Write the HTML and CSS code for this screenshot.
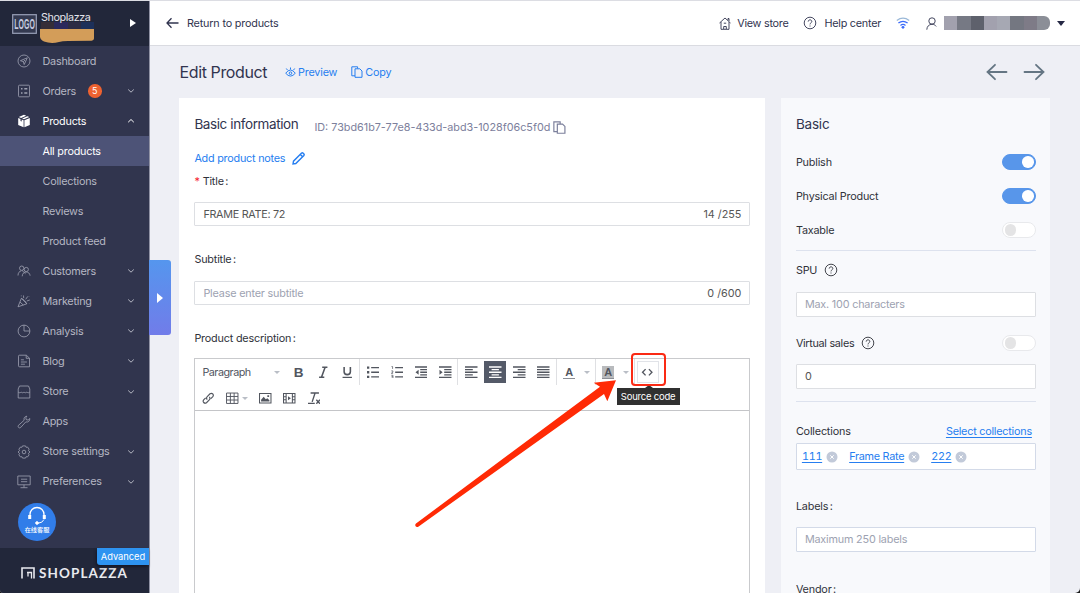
FILE: index.html
```html
<!DOCTYPE html>
<html lang="en">
<head>
<meta charset="UTF-8">
<meta name="viewport" content="width=device-width, initial-scale=1.0">
<title>Edit Product</title>
<link rel="stylesheet" href="styles.css">
</head>
<body>
    <!-- Shared icons -->
    <svg class="sprite">
        <symbol id="down" viewBox="0 0 8 6"><path d="M1.2 1.5 4 4.2 6.8 1.5"/></symbol>
        <symbol id="up" viewBox="0 0 8 6"><path d="M1.2 4.2 4 1.5 6.8 4.2"/></symbol>
        <symbol id="help" viewBox="0 0 14 14"><circle cx="7" cy="7" r="5.8"/><path d="M5.200 5.600c0-2.400 3.600-2.300 3.600-.1C8.800 6.900 7 6.800 7 8.400M7 9.500v1"/></symbol>
        <symbol id="copy" viewBox="0 0 12 12"><path d="M4 9.800H.8V.8h5.800V2.500M4 2.800h4.800l2.200 2.200v6.300H4z"/></symbol>
        <symbol id="remove" viewBox="0 0 12 12"><circle cx="6" cy="6" r="5.500" fill="#c2cad9" stroke="none"/><path d="M4.300 4.300l3.400 3.400M7.700 4.300 4.300 7.700" stroke="#fff"/></symbol>
    </svg>

    <div class="app">
        <aside class="sidebar">
            <div class="shop">
                <svg class="shop-logo" width="25" height="20" viewBox="0 0 25 20"><rect x=".7" y=".7" width="23.600" height="18.600" fill="#343a50" stroke="#9aa1b8" stroke-width="1.200"/><text x="2.300" y="8" transform="scale(1 1.900)" textLength="20.500" lengthAdjust="spacingAndGlyphs">LOGO</text></svg>
                <div class="shop-name">
                    <span>Shoplazza</span>
                    <svg width="56" height="24" viewBox="0 0 56 24"><path d="M1 2h13v8H1z" fill="#352d38"/><path d="M14 2h14v8H14z" fill="#2a285c"/><path d="M28 2h13v8H28z" fill="#2c2b44"/><path d="M41 2h13v8H41z" fill="#1d3059"/><path d="M0 9h54v9.500q0 2-2.500 2.200L28 21q-6 0-9 1-8 2-15-.5-4-2-4-5z" fill="#d39d59"/></svg>
                </div>
                <span class="play"></span>
            </div>

            <nav class="menu">
                <a class="menu-item"><svg class="icon" viewBox="0 0 14 14"><circle cx="7" cy="7" r="6"/><path d="M10.300 3.800 3.400 6.700l2.900.9.900 2.900zM6.300 7.600l1.700-1.500"/></svg><span>Dashboard</span></a>
                <a class="menu-item"><svg class="icon" viewBox="0 0 14 14"><rect x="1.500" y="1.200" width="11" height="11.600" rx="1"/><path d="M4 4.800h1.500M4 9h1.500M7.300 4.800h3M7.300 9h3" stroke-width="1.400"/></svg><span>Orders</span><b class="count">5</b><svg class="chevron"><use href="#down"/></svg></a>
                <a class="menu-item open"><svg class="icon solid" viewBox="0 0 14 14"><path d="M7 .8 9.200 1.700 4.100 4 1.800 3.100zM10.300 2.200l2 .9L7 5.300l-1.900-.8zM1.200 4l2.300 1v2l1.200.5V5.500L6.600 6.300v6.900L1.200 10.900zM12.800 4v6.900L7.400 13.200V6.300z"/></svg><span>Products</span><svg class="chevron"><use href="#up"/></svg></a>
                <a class="menu-item sub active"><span>All products</span></a>
                <a class="menu-item sub"><span>Collections</span></a>
                <a class="menu-item sub"><span>Reviews</span></a>
                <a class="menu-item sub"><span>Product feed</span></a>
                <a class="menu-item"><svg class="icon" viewBox="0 0 14 14"><circle cx="4.700" cy="4.200" r="2.200"/><circle cx="9.300" cy="5.500" r="2.100"/><path d="M1 11.500c0-2.600 1.300-4.300 3.300-4.600M5.200 12.300c.2-2.700 1.600-4.300 4-4.300 2.300 0 3.600 1.500 3.900 3.700M5 6.400l3.500 3.300"/></svg><span>Customers</span><svg class="chevron"><use href="#down"/></svg></a>
                <a class="menu-item"><svg class="icon" viewBox="0 0 14 14"><path d="M4.400 4.300 1 12.800l8.800-3zM3 8l3.200 3M4.400 4.300c2 1 4.500 3.300 5.400 5.500M6.700 4.100 6.500 1.500M8.700 5.300l2.100-2.900M9.800 7l3-1M12 2.300v.4M4.300 1.500v.8M12.300 9v.3"/></svg><span>Marketing</span><svg class="chevron"><use href="#down"/></svg></a>
                <a class="menu-item"><svg class="icon" viewBox="0 0 14 14"><circle cx="7" cy="7" r="5.900"/><path d="M7 1.100V7h5.900"/></svg><span>Analysis</span><svg class="chevron"><use href="#down"/></svg></a>
                <a class="menu-item"><svg class="icon" viewBox="0 0 14 14"><path d="M2.500 1.200h6.800l3.200 3v8.600h-10q-1 0-1-1V2.200q0-1 1-1zM9.200 1.300v3h3.200M3.900 5.800h3M3.900 8h6M3.900 10.200h4"/></svg><span>Blog</span><svg class="chevron"><use href="#down"/></svg></a>
                <a class="menu-item"><svg class="icon" viewBox="0 0 14 14"><path d="M2.500 1h9l1.300 3v9H1.200V4zM1.200 7c1 1 2.100 1 2.900 0 .9 1 2 1 2.900 0 .9 1 2 1 2.900 0 .8 1 2 1 2.900 0"/></svg><span>Store</span><svg class="chevron"><use href="#down"/></svg></a>
                <a class="menu-item"><svg class="icon" viewBox="0 0 14 14"><path d="M9.800 1.200c-2.200.2-3.300 2-2.600 4L1.400 10.400c-1 1.500.8 3.200 2.200 2.200l5.200-5.700c2.200.7 4.200-.8 4-3.400l-1.700 1.600-1.900-.5-.4-1.800zM3 10.900h.3"/></svg><span>Apps</span></a>
                <a class="menu-item"><svg class="icon" viewBox="0 0 14 14"><circle cx="7" cy="7" r="1.800"/><path d="M5.500.9h3l.6 1.400 1.500-.2 1.500 2.100-.7 1.400 1.600 1.400-1.600 1.400.7 1.400-1.500 2.100-1.500-.2-.6 1.400h-3l-.6-1.400-1.500.2-1.500-2.100.7-1.400L1 7l1.600-1.400-.7-1.400 1.500-2.100 1.500.2z"/></svg><span>Store settings</span><svg class="chevron"><use href="#down"/></svg></a>
                <a class="menu-item"><svg class="icon" viewBox="0 0 14 14"><path d="M.8 1h12.400v8.800H.8zM7 9.800v2.700M3.500 12.700h7M4 4.200h6.200M4 6.700h6.200"/></svg><span>Preferences</span><svg class="chevron"><use href="#down"/></svg></a>
            </nav>

            <div class="service">
                <svg width="20" height="19" viewBox="0 0 20 19"><path d="M3 9.500C2.300-1.200 17.700-1.200 17 9.500" stroke-width="1.300"/><path d="M2.700 9v4M17.300 9v4" stroke-width="3"/><path d="M17 13.500q-1.500 3.500-6 3.700" stroke-width="1"/><circle cx="10" cy="17" r="1.300" fill="#fff" stroke-width="1"/></svg>
                <span>在线客服</span>
            </div>

            <div class="brand">
                <span class="plan">Advanced</span>
                <svg width="14" height="12" viewBox="0 0 14 12"><path d="M1 11.500V1h12v10.500"/><path d="M6 5.500h4.500v6M7 5.500v4" stroke-width="1.300"/></svg>
                <span>SHOPLAZZA</span>
            </div>
            <button class="drawer"><span class="play"></span></button>
        </aside>

        <div class="page">
            <header class="topbar">
                <a class="back"><svg width="13" height="12" viewBox="0 0 13 12"><path d="M12.500 6H1M5.500 1.300 1 6l4.500 4.700"/></svg>Return to products</a>
                <div class="top-links">
                    <a class="store-link"><svg width="12" height="13" viewBox="0 0 12 13"><path d="M.5 6 6 1l5.500 5M2 5v7.300h8V5M4.700 12V9.500h2.600V12M4.800 6.200h2.400M9 3V1.500h1V4"/></svg>View store</a>
                    <a class="help-link"><svg width="14" height="14"><use href="#help"/></svg>Help center</a>
                    <svg class="wifi" width="14" height="12" viewBox="0 0 14 12"><path d="M.8 3.500q6.200-4.600 12.400 0" stroke="#9bb8d8"/><path d="M2.400 6.100q4.600-3.600 9.200 0M4.500 8.400q2.500-1.900 5 0" stroke="#3b6bfa"/><circle cx="7" cy="10.300" r="1.400" fill="#3b6bfa" stroke="none"/></svg>
                    <svg class="user" width="12" height="13" viewBox="0 0 12 13"><circle cx="6" cy="4" r="3.200"/><path d="M.8 12.700c.2-3.300 2-5.200 5.200-5.500 2 .1 3.200.9 4.200 2.200"/></svg>
                    <span class="user-name"><i></i><i></i><i></i><i></i><i></i><i></i><i></i><i></i></span>
                    <span class="caret"></span>
                </div>
            </header>

            <div class="heading">
                <h1>Edit Product</h1>
                <a class="preview"><svg width="11" height="11" viewBox="0 0 11 11"><path d="M.7 6.200Q5.500-.2 10.300 6.200 5.500 12 .7 6.200zM5.500 2.500V.5M2.500 3.100 1.300 1.500M8.500 3.100l1.200-1.600"/><circle cx="5.500" cy="6.200" r="1.300"/></svg>Preview</a>
                <a class="copy"><svg width="12" height="12"><use href="#copy"/></svg>Copy</a>
                <div class="pager">
                    <svg width="22" height="18" viewBox="0 0 22 18"><path d="M20.500 9H1.500M9 1.800 1.500 9 9 16.200"/></svg>
                    <svg width="22" height="18" viewBox="0 0 22 18"><path d="M1.500 9h19M13 1.800 20.500 9 13 16.200"/></svg>
                </div>
            </div>

            <div class="columns">
                <section class="card main-card">
                    <div class="card-head">
                        <h2>Basic information</h2>
                        <span class="product-id">ID: 73bd61b7-77e8-433d-abd3-1028f06c5f0d</span>
                        <svg width="13" height="13"><use href="#copy"/></svg>
                    </div>
                    <a class="notes">Add product notes<svg width="13" height="13" viewBox="0 0 13 13"><path d="M1 12l.5-2.800L9.600 1.100q.7-.6 1.400 0l.9.9q.6.700 0 1.400L3.800 11.500zM8.300 2.400l2.300 2.300"/></svg></a>
                    <label class="title-label"><em>*</em>Title<i>:</i></label>
                    <div class="field title-field"><span>FRAME RATE: 72</span><span class="counter">14 /255</span></div>
                    <label class="subtitle-label">Subtitle<i>:</i></label>
                    <div class="field subtitle-field"><span class="placeholder">Please enter subtitle</span><span class="counter">0 /600</span></div>
                    <label class="desc-label">Product description<i>:</i></label>

                    <div class="editor">
                        <div class="toolbar">
                            <div class="tools">
                                <div class="group">
                                    <span class="format">Paragraph<span class="tri"></span></span>
                                    <button><b class="glyph">B</b></button>
                                    <button><svg viewBox="0 0 12 12"><path d="M5 1.200h5M2 10.800h5M7.800 1.200 4.300 10.800" stroke-width="1.500"/></svg></button>
                                    <button><svg viewBox="0 0 12 12"><path d="M3 1v4.500q0 2.800 3 2.800t3-2.800V1" stroke-width="1.500"/><path d="M1.500 11h9"/></svg></button>
                                </div>
                                <div class="group">
                                    <button><svg viewBox="0 0 12 12"><path d="M4 1.500h8M4 6h8M4 10.500h8"/><path d="M0 1.500h2.200M0 6h2.200M0 10.500h2.200" stroke-width="2.200"/></svg></button>
                                    <button><svg viewBox="0 0 12 12"><path d="M4 1.500h8M4 6h8M4 10.500h8"/><path d="M.5.5h1v2.300M.3 4.700h1.500v1.200L.3 7h1.700M.3 8.900h1.600v2.800H.3M.5 10.200h1.400" stroke-width=".7"/></svg></button>
                                    <button><svg viewBox="0 0 12 12"><path d="M0 1h12M5 3.500h7M5 6h7M5 8.500h7M0 11h12"/><path d="M3.500 3.500v5L.5 6z" class="fill"/></svg></button>
                                    <button><svg viewBox="0 0 12 12"><path d="M0 1h12M5 3.500h7M5 6h7M5 8.500h7M0 11h12"/><path d="M.5 3.500v5l3-2.500z" class="fill"/></svg></button>
                                </div>
                                <div class="group">
                                    <button><svg viewBox="0 0 12 12"><path d="M0 1h12M0 3.500h7.500M0 6h12M0 8.500h7.500M0 11h12"/></svg></button>
                                    <button class="on"><svg viewBox="0 0 12 12"><path d="M0 1h12M2.500 3.500h7M0 6h12M2.500 8.500h7M0 11h12"/></svg></button>
                                    <button><svg viewBox="0 0 12 12"><path d="M0 1h12M4.500 3.500H12M0 6h12M4.500 8.500H12M0 11h12"/></svg></button>
                                    <button><svg viewBox="0 0 12 12"><path d="M0 1h12M0 3.500h12M0 6h12M0 8.500h12M0 11h12"/></svg></button>
                                </div>
                                <div class="group split">
                                    <button><span class="letter">A</span></button><span class="tri"></span>
                                </div>
                                <div class="group split">
                                    <button><span class="letter shade">A</span></button><span class="tri"></span>
                                </div>
                                <div class="group source">
                                    <button><svg viewBox="0 0 12 12"><path d="M4.400 3 1.500 6l2.900 3M7.600 3l2.900 3-2.900 3"/></svg></button>
                                    <span class="tooltip">Source code</span>
                                    <span class="mark"></span>
                                </div>
                            </div>
                            <div class="tools">
                                <button><svg viewBox="0 0 12 12"><path d="M5 7.300Q3.700 5.800 5 4.500L7.700 1.700q1.500-1 2.700.2 1 1.300 0 2.600L8.500 6.400M7 4.700q1.300 1.500 0 2.800l-2.700 2.800q-1.500 1-2.700-.2-1-1.300 0-2.600L3.500 5.600" stroke-width="1.100"/></svg></button>
                                <button><svg viewBox="0 0 12 12"><path d="M.5 1h11v10H.5zM.5 4.300h11M.5 7.700h11M4.200 1v10M7.800 1v10" stroke-width=".9"/></svg></button>
                                <span class="tri"></span>
                                <button><svg viewBox="0 0 12 12"><path d="M.5 1.500h11v9H.5z" stroke-width="1"/><path d="M2 9V7.500L4.500 4.500 6.500 7 8 6l2 2v1zM8 3h1.700v1.700H8z" class="fill"/></svg></button>
                                <button><svg viewBox="0 0 12 12"><path d="M.5 1.500h11v9H.5zM3 1.500v9M9 1.500v9M.5 4.500H3M.5 7.500H3M9 4.500h2.500M9 7.500h2.500" stroke-width="1"/><path d="M4.800 4v4L7.600 6z" class="fill"/></svg></button>
                                <button><svg viewBox="0 0 12 12"><path d="M2.500 1h8M0 11h6.500M6.800 1 4 9.500M8 7.500l3.500 3.800M11.500 7.500 8 11.300" stroke-width="1.300"/></svg></button>
                            </div>
                        </div>
                        <svg class="pointer" width="202" height="150" viewBox="0 0 202 150"><path d="M1 143.500 185 6.700l-6.300-4L201 .3l-8.700 21-3.300-7.300L3.300 146.700q-1.700 1-2.700-.4-.9-1.500.4-2.800z"/></svg>
                    </div>
                </section>

                <section class="card side-card">
                    <h2>Basic</h2>
                    <div class="option"><span>Publish</span><span class="switch checked"></span></div>
                    <div class="option"><span>Physical Product</span><span class="switch checked"></span></div>
                    <div class="option"><span>Taxable</span><span class="switch"></span></div>
                    <hr>
                    <div class="option spu"><span>SPU</span><svg class="help" width="14" height="14"><use href="#help"/></svg></div>
                    <div class="field spu-field"><span class="placeholder">Max. 100 characters</span></div>
                    <div class="option virtual"><span>Virtual sales</span><svg class="help" width="14" height="14"><use href="#help"/></svg><span class="switch"></span></div>
                    <div class="field"><span>0</span></div>
                    <hr>
                    <div class="option collections"><span>Collections</span><a class="select">Select collections</a></div>
                    <div class="field tags">
                        <a>111</a><svg width="12" height="12"><use href="#remove"/></svg>
                        <a>Frame Rate</a><svg width="12" height="12"><use href="#remove"/></svg>
                        <a>222</a><svg width="12" height="12"><use href="#remove"/></svg>
                    </div>
                    <label class="labels">Labels<i>:</i></label>
                    <div class="field labels-field"><span class="placeholder">Maximum 250 labels</span></div>
                    <label class="vendor">Vendor<i>:</i></label>
                </section>
            </div>
        </div>
    </div>
</body>
</html>
```
FILE: styles.css
```css
/* Global Styles */
* {
    box-sizing: border-box;
}

html {
    background-color: #1a1a1a;
}

body {
    margin: 0;
    height: 593px;
    overflow: hidden;
    font-family: Inter, "Noto Sans CJK SC", sans-serif;
    font-size: 10.8px;
    letter-spacing: -.18px;
    color: #30323a;
}

svg {
    fill: none;
    stroke: currentColor;
    flex: none;
}

h1, h2 {
    margin: 0;
    font-weight: 400;
    color: #31344f;
}

button {
    padding: 0;
    border: 0;
    background: none;
    color: inherit;
}

.sprite {
    position: absolute;
    width: 0;
    height: 0;
}

.app {
    display: flex;
    height: 593px;
    border-top: 1px solid #dcdde3;
    border-radius: 0 0 5px 4px;
    overflow: hidden;
    background-color: #eeeff5;
}

/* Sidebar */
.sidebar {
    position: relative;
    display: flex;
    flex-direction: column;
    flex: none;
    width: 150px;
    border-right: 1px solid #9092a4;
    background-color: #31354e;
    color: #b5b7c3;
}

.shop {
    display: flex;
    height: 45px;
    padding: 12px 13px 0 12px;
    background-color: #22273a;
}

.shop-logo {
    margin-top: 1px;
}

.shop-logo text {
    font: 700 7.500px "Liberation Sans", sans-serif;
    letter-spacing: 0;
    fill: #c3c9df;
    stroke: none;
}

.shop-name {
    display: flex;
    flex-direction: column;
    width: 92px;
    padding-left: 4px;
    color: #e4e5ec;
    line-height: 9px;
    letter-spacing: -.4px;
}

.shop-name svg {
    margin: -2px 0 0 -1px;
    stroke: none;
}

.shop-name span {
    position: relative;
}

.play {
    width: 0;
    height: 0;
    border: 4px solid transparent;
    border-left: 6px solid #fff;
    border-right: 0;
}

.shop .play {
    margin: 6px 0 0 1px;
}

.menu-item {
    display: flex;
    align-items: center;
    height: 30.05px;
    padding: 0 14px 0 17px;
    letter-spacing: -.22px;
}

.menu-item .icon {
    width: 14px;
    height: 14px;
    margin-right: 11.5px;
    stroke-width: .8;
    color: #9fa2b2;
}

.menu-item .icon.solid {
    fill: #fff;
    stroke: none;
}

.menu-item.sub {
    padding-left: 42.5px;
}

.menu-item.open,
.menu-item.active {
    color: #fff;
}

.menu-item.active {
    background-color: #4d5377;
}

.chevron {
    width: 8px;
    height: 6px;
    margin-left: auto;
}

.count {
    width: 13.5px;
    height: 13.5px;
    margin-left: 12px;
    border-radius: 50%;
    background-color: #ee6230;
    color: #fff;
    font-size: 9px;
    font-weight: 400;
    line-height: 13.5px;
    text-align: center;
}

.service {
    display: flex;
    flex-direction: column;
    align-items: center;
    width: 38px;
    height: 38px;
    margin: 6px 0 0 18px;
    padding-top: 3.5px;
    border-radius: 50%;
    background-color: #317de9;
    color: #fff;
}

.service span {
    font-size: 6.2px;
    font-weight: 500;
    line-height: 9px;
    letter-spacing: 0;
}

.brand {
    position: relative;
    display: flex;
    align-items: center;
    gap: 4px;
    height: 45px;
    margin-top: auto;
    padding: 5px 0 0 21px;
    background-color: #22273a;
    color: #e9eaef;
    font: 700 13.5px Lato, sans-serif;
    letter-spacing: 1.1px;
}

.brand svg {
    stroke-width: 1.6;
}

.plan {
    position: absolute;
    top: 0;
    right: 0;
    width: 52px;
    height: 16.5px;
    border-radius: 0 0 0 3px;
    background-color: #2e93f0;
    box-shadow: -1px 2px 3px #151827;
    color: #fff;
    font: 400 9.3px/17px Inter, sans-serif;
    letter-spacing: 0;
    text-align: center;
}

.drawer {
    position: absolute;
    top: 259px;
    left: 149px;
    display: flex;
    align-items: center;
    width: 22px;
    height: 75px;
    padding-left: 8px;
    border-radius: 0 3px 3px 0;
    background: linear-gradient(#5596ee, #717ce9);
}

.drawer .play {
    border-width: 5.5px 0 5.5px 6px;
}

/* Top bar */
.page {
    flex: 1;
    min-width: 0;
}

.topbar {
    display: flex;
    align-items: center;
    justify-content: space-between;
    height: 45px;
    padding: 0 15px 0 16px;
    border-bottom: 1px solid #dadbe1;
    background-color: #fff;
    color: #31344f;
}

.topbar a {
    display: flex;
    align-items: center;
}

.back svg {
    margin-right: 8px;
    stroke-width: 1.3;
}

.top-links {
    display: flex;
    align-items: center;
}

.top-links a {
    letter-spacing: -.25px;
}

.top-links svg {
    stroke-width: .9;
}

.store-link svg {
    margin-right: 6px;
}

.help-link {
    margin-left: 14px;
}

.help-link svg {
    margin-right: 8px;
}

.top-links .wifi {
    margin-left: 15px;
    stroke-width: 1.3;
}

.user {
    margin-left: 16px;
}

.user-name {
    display: flex;
    width: 106px;
    height: 14px;
    margin-left: 6px;
    border-radius: 0 6px 6px 0;
    overflow: hidden;
}

.user-name i {
    flex: 1;
    background-color: #a2a1ae;
}

.user-name i:nth-child(2) { background-color: #767984; }
.user-name i:nth-child(3) { background-color: #5e616c; }
.user-name i:nth-child(5) { background-color: #a6a8b3; }
.user-name i:nth-child(6) { background-color: #747781; }
.user-name i:nth-child(7) { background-color: #7e7b87; }
.user-name i:nth-child(8) { background-color: #8b8e97; }

.caret {
    margin-left: 7px;
    border: 4px solid transparent;
    border-top: 5px solid #252844;
    border-bottom: 0;
}

/* Page heading */
.heading {
    display: flex;
    align-items: center;
    height: 52px;
    padding: 0 35px 0 29.5px;
}

.heading h1 {
    width: 105.5px;
    font-size: 16px;
    letter-spacing: -.38px;
    white-space: nowrap;
}

.heading a,
.notes {
    display: flex;
    align-items: center;
    color: #267ef0;
}

.heading a svg {
    margin-right: 2px;
}

.heading .copy {
    margin-left: 14px;
}

.pager {
    display: flex;
    gap: 15px;
    margin-left: auto;
    color: #647583;
}

.pager svg {
    stroke-width: 1.8;
    stroke-linecap: round;
}

/* Cards */
.columns {
    display: flex;
    gap: 15.5px;
    height: 495px;
    padding-left: 29.4px;
}

.card {
    display: flex;
    flex-direction: column;
    padding: 15px 15px 0;
    background-color: #fff;
}

.main-card {
    width: 586px;
}

.side-card {
    width: 269.5px;
    padding-right: 14.5px;
    background-color: #f8f9fc;
}

.card h2 {
    font-size: 13.5px;
    line-height: 22px;
    letter-spacing: -.4px;
    white-space: nowrap;
}

.side-card h2 {
    letter-spacing: -.2px;
}

.card-head {
    display: flex;
    height: 22px;
    color: #7c809c;
}

.card-head h2 {
    width: 120px;
}

.product-id {
    line-height: 30px;
    letter-spacing: 0;
}

.card-head svg {
    margin: 7.5px 0 0 3px;
    stroke-width: 1.1;
}

.notes {
    height: 20px;
    margin-top: 13px;
    letter-spacing: -.22px;
}

.notes svg {
    margin-left: 7px;
    stroke-width: 1.4;
}

label {
    flex: none;
    line-height: 21px;
    height: 20px;
}

label i {
    margin-left: 1.5px;
    font-style: normal;
}

label em {
    margin-right: 3px;
    color: #f5222d;
    font-style: normal;
}

.title-label {
    margin-top: 3px;
}

.field {
    display: flex;
    flex: none;
    align-items: center;
    justify-content: space-between;
    height: 24px;
    padding: 0 8px;
    border: 1px solid #dddfe3;
    border-radius: 1px;
    background-color: #fff;
    color: #555;
}

.title-field {
    margin-top: 11px;
    letter-spacing: -.3px;
}

.counter {
    letter-spacing: 0;
}

.placeholder {
    color: #9da2b1;
}

.subtitle-field {
    margin-top: 12px;
}

.subtitle-label,
.desc-label {
    margin-top: 23px;
}

/* Rich text editor */
.editor {
    position: relative;
    flex: 1;
    margin-top: 10px;
    border: 1px solid #c9cacd;
    border-bottom: 0;
    color: #52565f;
}

.toolbar {
    height: 52px;
    border-bottom: 1px solid #c4c5c8;
}

.tools,
.group {
    display: flex;
    align-items: center;
    height: 26px;
}

.toolbar button {
    display: flex;
    align-items: center;
    justify-content: center;
    flex: none;
    width: 24.1px;
    height: 22px;
}

.toolbar button svg {
    width: 12.5px;
    height: 12.5px;
    stroke-width: 1.3;
}

.toolbar .fill {
    fill: currentColor;
    stroke: none;
}

.group {
    border-right: 1px solid #dfe0e3;
    padding-left: 1px;
}

.format {
    display: flex;
    align-items: center;
    justify-content: space-between;
    width: 90.3px;
    padding: 0 7px 0 6px;
    letter-spacing: -.5px;
}

.glyph {
    font: 700 13.5px "Liberation Sans", sans-serif;
}

.tri {
    border: 3px solid transparent;
    border-top-color: #b9bec6;
    border-bottom: 0;
}

.toolbar .on {
    width: 22px;
    margin: 0 1px;
    background-color: #545a68;
    color: #fff;
}

.split {
    width: 39px;
    padding-left: .5px;
}

.split .tri {
    margin-left: 3px;
}

.letter {
    width: 12px;
    height: 13px;
    border-bottom: 1.5px solid #8b8e95;
    font: 700 11px/12px "Liberation Sans", sans-serif;
    text-align: center;
}

.letter.shade {
    background-color: #b8babd;
}

.source {
    position: relative;
    padding-left: 2px;
    border: 0;
}

.source button {
    width: 22px;
    border: 1px solid #e1e3e8;
}

.tooltip {
    position: absolute;
    top: 29px;
    left: -18px;
    width: 63px;
    height: 17px;
    background-color: #303030;
    color: #fff;
    font: 9.5px/17px Inter, sans-serif;
    letter-spacing: -.22px;
    text-align: center;
    white-space: nowrap;
}

.tooltip::before {
    content: "";
    position: absolute;
    top: -3px;
    left: 28px;
    border: 4px solid transparent;
    border-top: 0;
    border-bottom: 3px solid #303030;
}

.mark {
    position: absolute;
    top: -6px;
    left: -4px;
    width: 35px;
    height: 33px;
    border: 2.5px solid #fa2a14;
    border-radius: 4px;
}

.tools > .tri {
    margin: 0 6px 0 -3px;
}

.tools:last-child {
    padding-left: 1px;
}

.pointer {
    position: absolute;
    top: 21px;
    left: 220px;
    fill: #ff2a05;
    stroke: none;
}

/* Side card */
.side-card .option {
    display: flex;
    align-items: center;
    flex: none;
    height: 34px;
}

.side-card h2 {
    margin-bottom: 10px;
}

.switch {
    width: 33.5px;
    height: 15.5px;
    margin-left: auto;
    padding: 1.2px;
    border: 1px solid #e8e9ec;
    border-radius: 8px;
    background-color: #fff;
}

.switch::before {
    content: "";
    display: block;
    width: 11.5px;
    height: 11.5px;
    border-radius: 50%;
    background-color: #e4e4e5;
}

.switch.checked {
    border-color: #5896ea;
    background-color: #5896ea;
}

.switch.checked::before {
    margin-left: auto;
    background-color: #fff;
}

hr {
    flex: none;
    width: 100%;
    height: 1px;
    margin: 3px 0 0;
    border: 0;
    background-color: #dde2ee;
}

.help {
    margin-left: 7px;
    stroke-width: .9;
}

.side-card .spu {
    height: 20px;
    margin-top: 9px;
}

.side-card .spu-field {
    margin-top: 12px;
}

.side-card .field {
    height: 25px;
}

.side-card .virtual {
    height: 20px;
    margin: 16px 0 11px;
    letter-spacing: -.3px;
}

.side-card .field + hr {
    margin-top: 12px;
}

.side-card .collections {
    height: 20px;
    margin-top: 19px;
    padding-right: 4px;
}

.side-card a {
    color: #267ef0;
    text-decoration: underline;
    text-underline-offset: 1.5px;
}

.select {
    margin-left: auto;
    letter-spacing: -.22px;
}

.side-card .tags {
    justify-content: flex-start;
    height: 27px;
    margin-top: 2px;
    padding: 0 5px;
    border-color: #d3dae8;
    font-variant-numeric: tabular-nums;
    letter-spacing: -.25px;
}

.tags svg {
    margin: 0 11px 0 4px;
    stroke-width: 1;
}

.labels {
    margin-top: 26px;
}

.side-card .labels-field {
    margin-top: 11px;
    border-color: #d3dae8;
}

.vendor {
    margin-top: 27px;
}
```
